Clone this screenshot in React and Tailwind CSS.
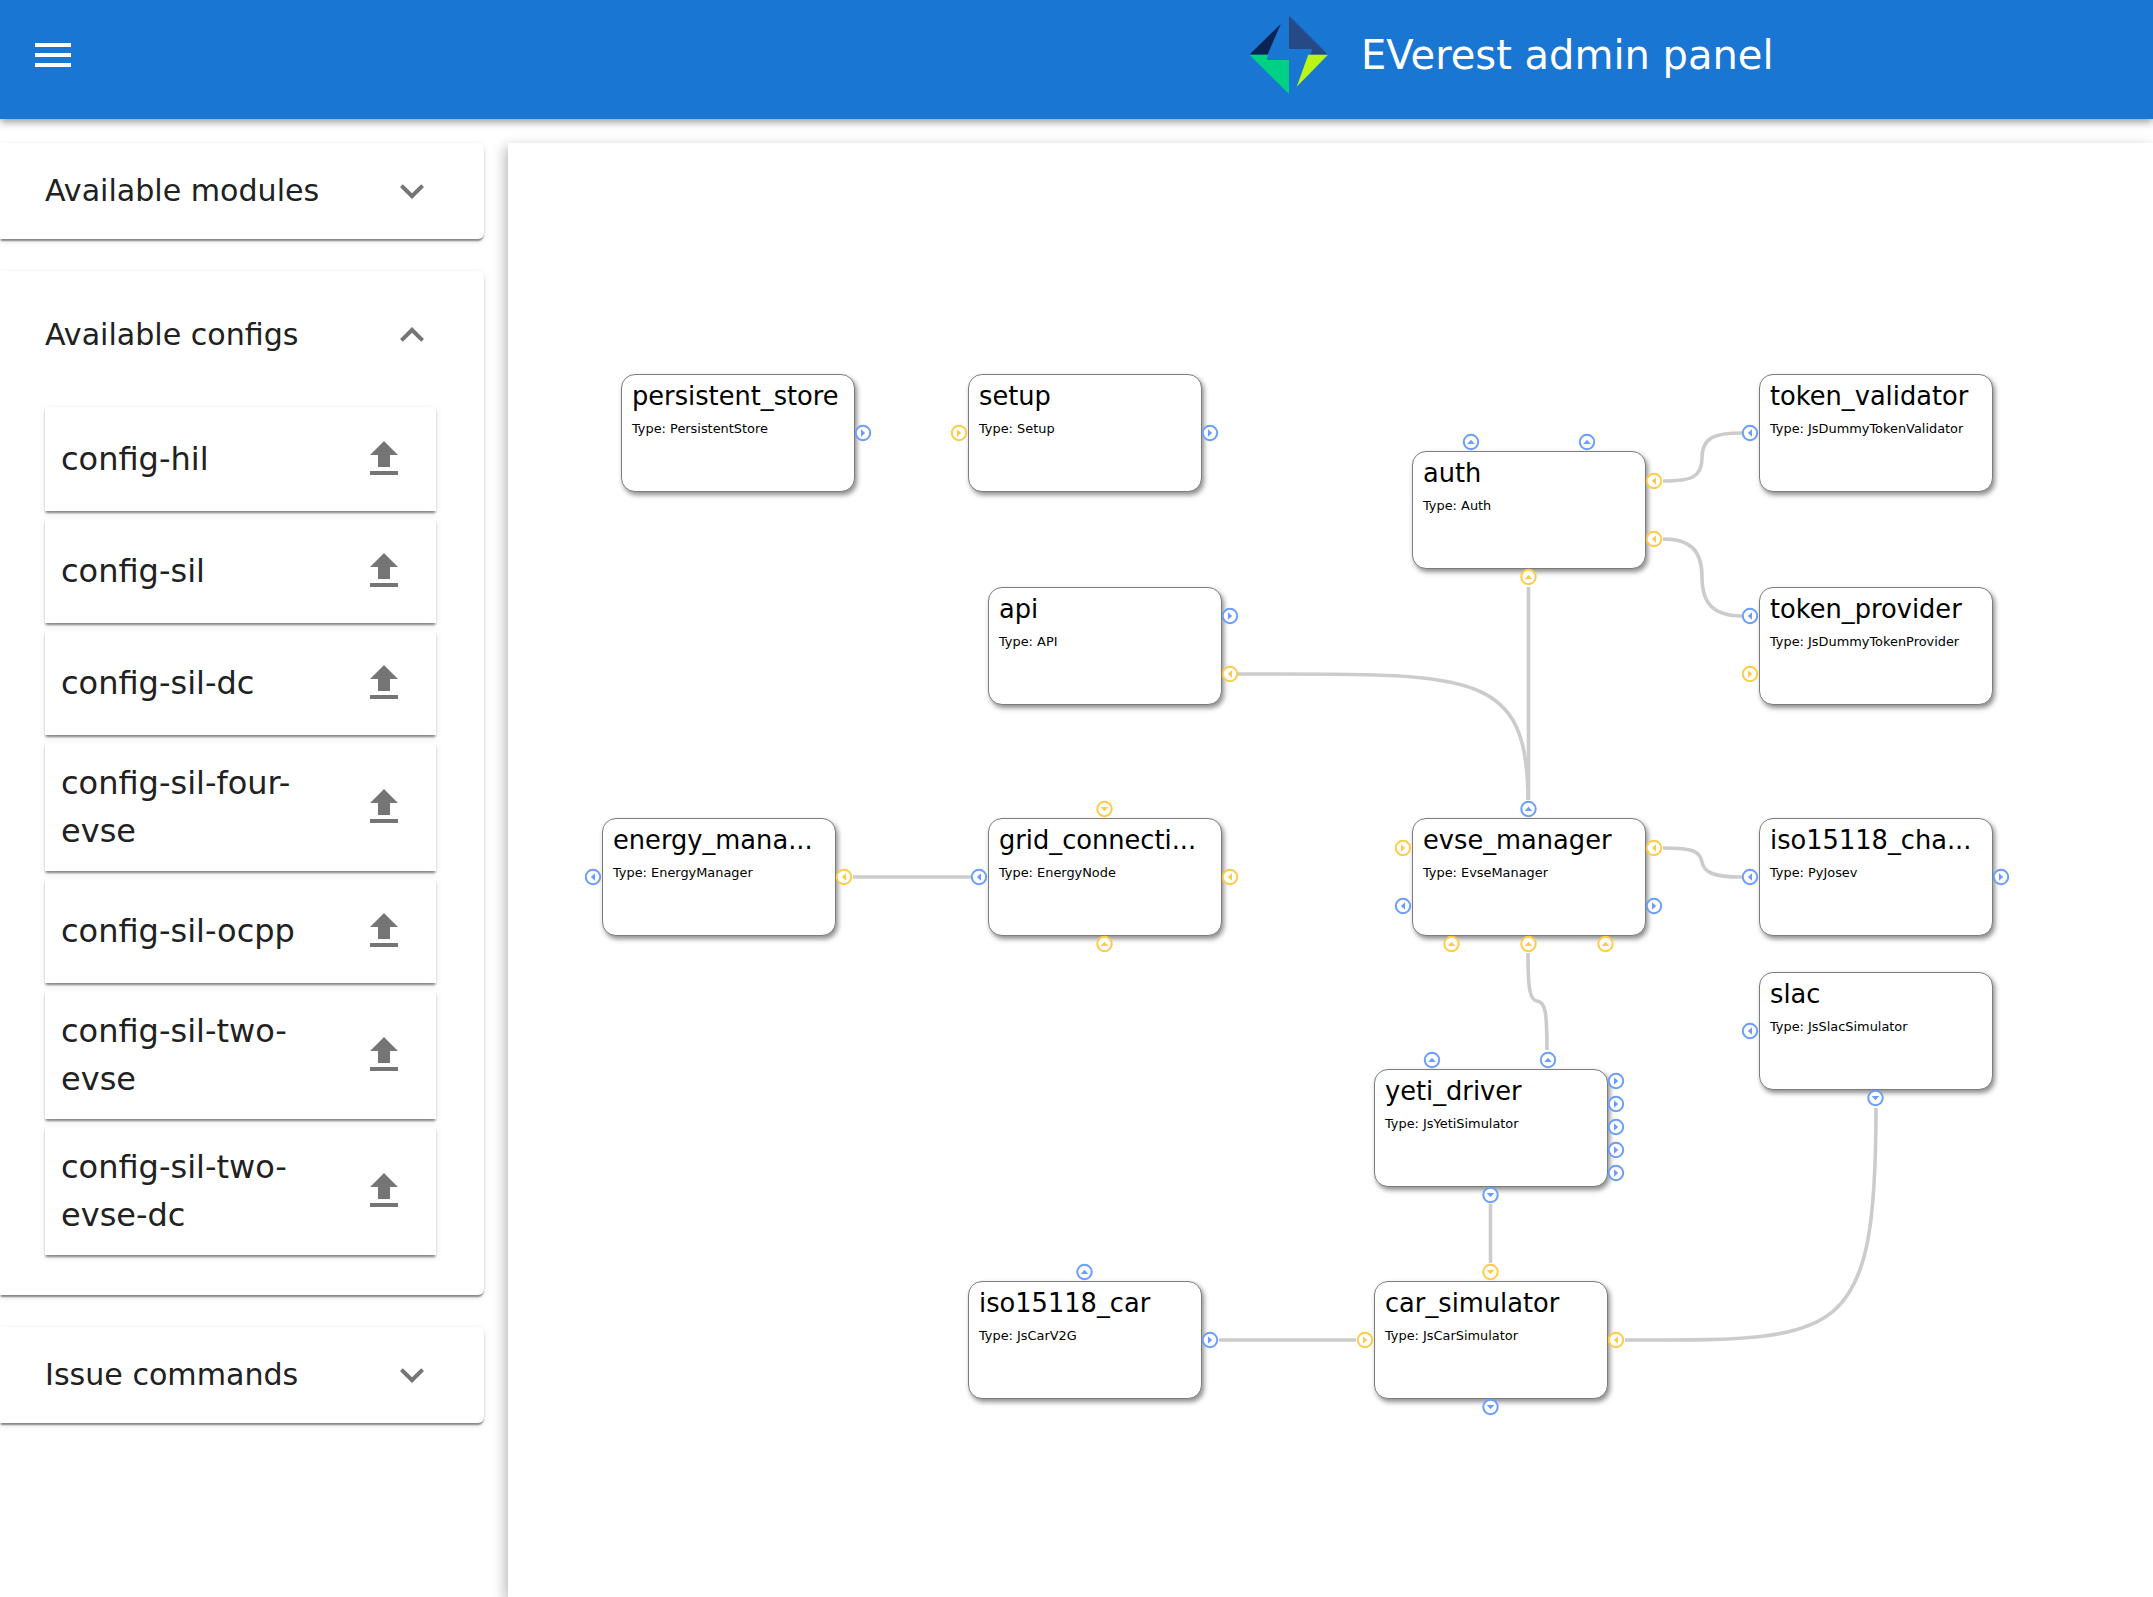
// EVerest admin panel: sidebar accordions + module graph canvas
const CANVAS_X = 508
const CANVAS_Y = 143

const NODE_W = 233
const NODE_H = 117

// p = provides (blue, arrow out), r = requires (yellow, arrow in)
const nodes = [
  { id: 'persistent_store', type: 'PersistentStore', x: 621, y: 374, right: [['p', 59]] },
  { id: 'setup', type: 'Setup', x: 968, y: 374, left: [['r', 59]], right: [['p', 59]] },
  { id: 'token_validator', type: 'JsDummyTokenValidator', x: 1759, y: 374, left: [['p', 59]] },
  { id: 'auth', type: 'Auth', x: 1412, y: 451, top: [['p', 59], ['p', 175]], right: [['r', 30], ['r', 88]], bottom: [['r', 116.5]] },
  { id: 'api', type: 'API', x: 988, y: 587, right: [['p', 29], ['r', 87]] },
  { id: 'token_provider', type: 'JsDummyTokenProvider', x: 1759, y: 587, left: [['p', 29], ['r', 87]] },
  { id: 'energy_mana...', type: 'EnergyManager', x: 602, y: 818, left: [['p', 59]], right: [['r', 59]] },
  { id: 'grid_connecti...', type: 'EnergyNode', x: 988, y: 818, top: [['r', 116.5]], left: [['p', 59]], right: [['r', 59]], bottom: [['r', 116.5]] },
  { id: 'evse_manager', type: 'EvseManager', x: 1412, y: 818, top: [['p', 116.5]], left: [['r', 30], ['p', 88]], right: [['r', 30], ['p', 88]], bottom: [['r', 39.5], ['r', 116.5], ['r', 193.5]] },
  { id: 'iso15118_cha...', type: 'PyJosev', x: 1759, y: 818, left: [['p', 59]], right: [['p', 59]] },
  { id: 'slac', type: 'JsSlacSimulator', x: 1759, y: 972, left: [['p', 59]], bottom: [['p', 116.5]] },
  { id: 'yeti_driver', type: 'JsYetiSimulator', x: 1374, y: 1069, top: [['p', 58], ['p', 174]], right: [['p', 12], ['p', 35], ['p', 58], ['p', 81], ['p', 104]], bottom: [['p', 116.5]] },
  { id: 'iso15118_car', type: 'JsCarV2G', x: 968, y: 1281, top: [['p', 116.5]], right: [['p', 59]] },
  { id: 'car_simulator', type: 'JsCarSimulator', x: 1374, y: 1281, top: [['r', 116.5]], left: [['r', 59]], right: [['r', 59]], bottom: [['p', 116.5]] },
]

const edges = [
  'M1663 481C1690 481 1702 478 1702 458C1702 437 1715 433 1742 433',
  'M1663 539C1690 539 1702 550 1702 577C1702 605 1715 616 1742 616',
  'M1528.5 587L1528.5 800',
  'M1238 674C1470 674 1528 668 1528 800',
  'M853 877L971 877',
  'M1663 848C1695 848 1700 852 1702 862C1704 872 1712 877 1742 877',
  'M1528 953C1528 990 1530 1000 1537 1001C1545 1002 1547 1010 1547 1050',
  'M1490.5 1204L1490.5 1263',
  'M1219 1340L1356 1340',
  'M1625 1340C1840 1340 1876 1345 1876 1108',
]

const configs = [
  ['config-hil', 'h-[104px]'],
  ['config-sil', 'h-[104px]'],
  ['config-sil-dc', 'h-[104px]'],
  ['config-sil-four-evse', 'h-[128px]'],
  ['config-sil-ocpp', 'h-[104px]'],
  ['config-sil-two-evse', 'h-[128px]'],
  ['config-sil-two-evse-dc', 'h-[128px]'],
]

const paperShadow = 'shadow-[0_3px_2px_-1px_rgba(0,0,0,0.35),0_2px_2px_0_rgba(0,0,0,0.14),0_2px_7px_0_rgba(0,0,0,0.1)]'

function Chevron({ up }) {
  return (
    <svg viewBox="0 0 24 24" className="w-12 h-12 fill-[#757575]">
      <path d={up ? 'M12 8l-6 6 1.41 1.41L12 10.83l4.59 4.58L18 14z' : 'M16.59 8.59L12 13.17 7.41 8.59 6 10l6 6 6-6z'} />
    </svg>
  )
}

function AccordionHead({ title, up, tall }) {
  return (
    <div className={`flex items-center justify-between pl-[45px] pr-12 ${tall ? 'h-[128px]' : 'h-[96px]'}`}>
      <span className="text-[30.1px] text-[#212121]">{title}</span>
      <Chevron up={up} />
    </div>
  )
}

function ConfigCard({ name, height }) {
  return (
    <div className={`flex items-center pl-[16px] pr-[28px] bg-white ${height} ${paperShadow}`}>
      <span className="flex-1 text-[32px] leading-[48px] text-[#212121]">{name}</span>
      <svg viewBox="0 0 24 24" className="w-12 h-12 shrink-0 fill-[#757575]">
        <path d="M5 20h14v-2H5v2zm0-10h4v6h6v-6h4l-7-7-7 7z" />
      </svg>
    </div>
  )
}

function Logo() {
  return (
    <svg viewBox="1249 15 80 80" className="w-20 h-20">
      <polygon fill="#0b2352" points="1280.7,24 1249.3,54.7 1267.5,54.7" />
      <polygon fill="#264a86" points="1289,15.7 1328,54.7 1310.7,54.7 1312,49 1289,49" />
      <polygon fill="#00d084" points="1249.3,54.7 1289,94 1289,60 1266.7,60 1268.3,54.7" />
      <polygon fill="#b9f516" points="1308.3,54.7 1328,54.7 1296.7,86.7" />
    </svg>
  )
}

function Port({ cx, cy, kind, dir }) {
  const color = kind === 'p' ? '#6b9dff' : '#ffcb47'
  const t = {
    up: `${cx - 3.8},${cy + 2} ${cx + 3.8},${cy + 2} ${cx},${cy - 2.2}`,
    down: `${cx - 3.8},${cy - 2} ${cx + 3.8},${cy - 2} ${cx},${cy + 2.2}`,
    left: `${cx + 2},${cy - 3.8} ${cx + 2},${cy + 3.8} ${cx - 2.2},${cy}`,
    right: `${cx - 2},${cy - 3.8} ${cx - 2},${cy + 3.8} ${cx + 2.2},${cy}`,
  }[dir]
  return (
    <g>
      <circle cx={cx} cy={cy} r="7.2" fill="white" stroke={color} strokeWidth="2" />
      <polygon points={t} fill={color} />
    </g>
  )
}

const opposite = { top: 'down', bottom: 'up', left: 'right', right: 'left' }
const outward = { top: 'up', bottom: 'down', left: 'left', right: 'right' }

function NodePorts({ node }) {
  const out = []
  const place = (side, kind, offset) => {
    const dir = kind === 'p' ? outward[side] : opposite[side]
    let cx, cy
    if (side === 'top' || side === 'bottom') {
      cx = node.x + offset
      cy = side === 'top' ? node.y - 9 : node.y + NODE_H + 9
    } else {
      cy = node.y + offset
      cx = side === 'left' ? node.x - 9 : node.x + NODE_W + 9
    }
    return <Port key={`${side}-${offset}`} cx={cx} cy={cy} kind={kind} dir={dir} />
  }
  for (const side of ['top', 'bottom', 'left', 'right']) {
    for (const [kind, offset] of node[side] || []) out.push(place(side, kind, offset))
  }
  return out
}

function ModuleNode({ node }) {
  return (
    <div
      className="absolute w-[234px] h-[118px] bg-white rounded-[14px] border border-[#7d7d7d] shadow-[2px_3px_5px_rgba(0,0,0,0.45)] pl-[10px] pt-[3px] text-black"
      style={{ left: node.x - CANVAS_X, top: node.y - CANVAS_Y }}
    >
      <div className="text-[25.7px] leading-[36px] whitespace-nowrap">{node.id}</div>
      <div className="text-[12.9px] leading-[18px] mt-[6px] whitespace-nowrap">Type: {node.type}</div>
    </div>
  )
}

export default function App() {
  return (
    <div className="h-screen flex flex-col overflow-hidden bg-white font-['DejaVu_Sans',sans-serif]">
      <header className="relative z-10 h-[119px] shrink-0 bg-[#1976d2] flex shadow-[0_3px_8px_rgba(0,0,0,0.4)]">
        <svg viewBox="0 0 24 24" className="w-12 h-12 ml-[29px] mt-[31px] fill-white">
          <path d="M3 18h18v-2H3v2zm0-5h18v-2H3v2zm0-7v2h18V6H3z" />
        </svg>
        <div className="ml-[1172px] mt-[15px] h-20">
          <Logo />
        </div>
        <div className="ml-[32px] mt-[31px] text-[40px] leading-[48px] text-white">EVerest admin panel</div>
      </header>

      <div className="flex-1 flex gap-6 pt-6 min-h-0">
        <aside className="w-[484px] shrink-0 flex flex-col gap-8">
          <section className={`rounded-r-[6px] bg-white ${paperShadow}`}>
            <AccordionHead title="Available modules" />
          </section>
          <section className={`rounded-r-[6px] bg-white pb-[40px] ${paperShadow}`}>
            <AccordionHead title="Available configs" up tall />
            <div className="mt-2 ml-[45px] mr-[48px] flex flex-col gap-2">
              {configs.map(([name, height]) => (
                <ConfigCard key={name} name={name} height={height} />
              ))}
            </div>
          </section>
          <section className={`rounded-r-[6px] bg-white ${paperShadow}`}>
            <AccordionHead title="Issue commands" />
          </section>
        </aside>

        <main className="relative flex-1 bg-white overflow-hidden shadow-[-3px_4px_12px_rgba(0,0,0,0.28)]">
          <svg viewBox={`${CANVAS_X} ${CANVAS_Y} 1645 1454`} className="absolute inset-0 w-full h-full">
            {edges.map((d) => (
              <path key={d} d={d} fill="none" stroke="#cccccc" strokeWidth="3.6" />
            ))}
          </svg>
          {nodes.map((n) => (
            <ModuleNode key={n.id} node={n} />
          ))}
          <svg viewBox={`${CANVAS_X} ${CANVAS_Y} 1645 1454`} className="absolute inset-0 w-full h-full pointer-events-none">
            {nodes.map((n) => (
              <NodePorts key={n.id} node={n} />
            ))}
          </svg>
        </main>
      </div>
    </div>
  )
}
